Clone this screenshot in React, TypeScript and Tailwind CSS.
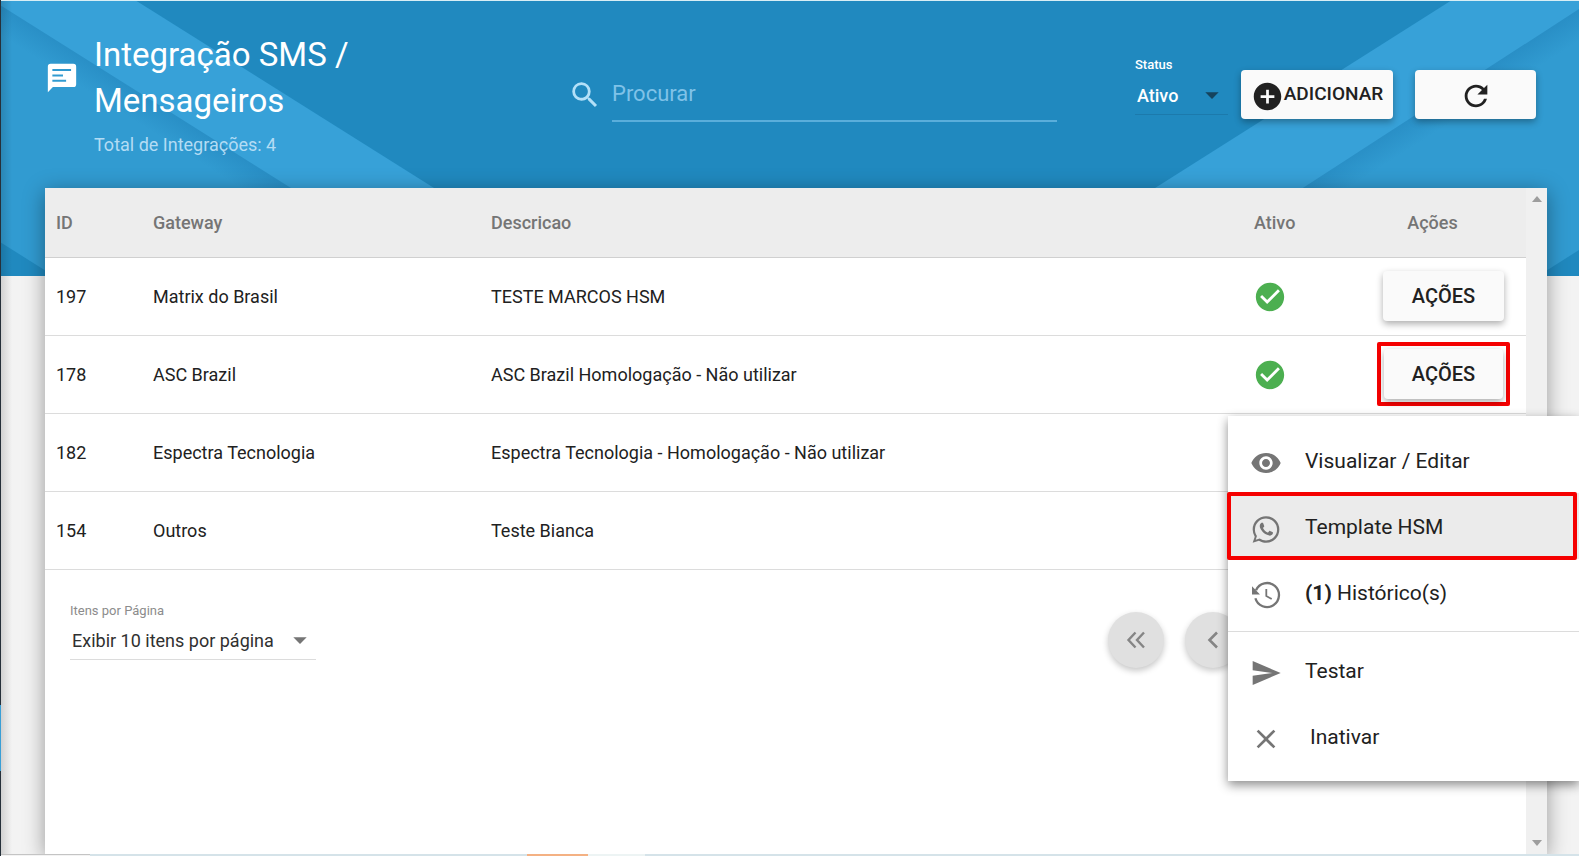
import React from "react";
import {
  MdSearch,
  MdAddCircle,
  MdRefresh,
  MdCheckCircle,
  MdVisibility,
  MdSend,
  MdClose,
  MdArrowDropDown,
} from "react-icons/md";

type Integration = {
  id: number;
  gateway: string;
  description: string;
  active: boolean;
  highlighted?: boolean;
};

const integrations: Integration[] = [
  { id: 197, gateway: "Matrix do Brasil", description: "TESTE MARCOS HSM", active: true },
  { id: 178, gateway: "ASC Brazil", description: "ASC Brazil Homologação - Não utilizar", active: true, highlighted: true },
  { id: 182, gateway: "Espectra Tecnologia", description: "Espectra Tecnologia - Homologação - Não utilizar", active: false },
  { id: 154, gateway: "Outros", description: "Teste Bianca", active: false },
];

const raised = "rounded-[4px] bg-[#fafafa] text-[#212121] shadow-[0_3px_7px_rgba(0,0,0,0.32)]";

function Backdrop() {
  return (
    <svg
      className="absolute inset-0 h-full w-full"
      viewBox="0 0 1579 276"
      preserveAspectRatio="none"
      aria-hidden="true"
    >
      <defs>
        <linearGradient id="shadeL" gradientUnits="userSpaceOnUse" x1="143" y1="95" x2="129" y2="117">
          <stop offset="0" stopColor="#298fc6" />
          <stop offset="1" stopColor="#319bd1" />
        </linearGradient>
        <linearGradient id="shadeR" gradientUnits="userSpaceOnUse" x1="1441" y1="98" x2="1455" y2="120">
          <stop offset="0" stopColor="#298fc6" />
          <stop offset="1" stopColor="#319bd1" />
        </linearGradient>
      </defs>
      <rect width="1579" height="276" fill="#2089bf" />
      <polygon points="0,0 135,0 574,276 0,276" fill="#37a1d8" />
      <polygon points="0,5 431,276 0,276" fill="url(#shadeL)" />
      <polygon points="0,242 54,276 0,276" fill="#2089bf" />
      <polygon points="1579,0 1452,0 1016,276 1579,276" fill="#37a1d8" />
      <polygon points="1579,9 1167,276 1579,276" fill="url(#shadeR)" />
      <polygon points="1579,250 1538,276 1579,276" fill="#2089bf" />
    </svg>
  );
}

function ChatIcon() {
  return (
    <svg className="h-[34px] w-[34px]" viewBox="0 0 24 24" aria-hidden="true">
      <path
        fill="currentColor"
        fillRule="evenodd"
        d="M4 2h16a2 2 0 0 1 2 2v12.400a2 2 0 0 1-2 2H5.600L2 22V4a2 2 0 0 1 2-2zM5.200 5.600V7h13.200V5.600zM5.200 9.500v1.400h7.500V9.500zM5.200 13.300v1.400h9.700v-1.400z"
      />
    </svg>
  );
}

function Header() {
  return (
    <div className="relative flex h-[187px] pl-[45px] pr-[43px] text-white">
      <div className="mt-[60px] shrink-0">
        <ChatIcon />
      </div>
      <div className="ml-[15px] w-[474px] shrink-0 pt-[31px]">
        <h1 className="w-[300px] text-[33px] leading-[46px]">Integração SMS / Mensageiros</h1>
        <p className="mt-[9px] text-[18px] leading-6 text-[#b3dcf4]">Total de Integrações: 4</p>
      </div>
      <label className="flex min-w-0 flex-1 pt-[69px]">
        <MdSearch className="mt-2 h-[34px] w-[34px] shrink-0 text-[#b3e0f8]" aria-hidden="true" />
        <input
          type="text"
          aria-label="Procurar"
          placeholder="Procurar"
          className="ml-[10px] h-[52px] min-w-0 flex-1 border-b-2 border-[#5aaedb] bg-transparent pb-1 text-[22px] outline-none placeholder:text-[#7fc2e8]"
        />
      </label>
      <div className="relative ml-[78px] w-[93px] shrink-0 pt-[55px]">
        <label htmlFor="status" className="block text-[13px] font-medium leading-[18px]">
          Status
        </label>
        <select
          id="status"
          defaultValue="Ativo"
          className="mt-1 h-[37px] w-full appearance-none border-b border-[#1c7aac] bg-transparent pb-[2px] pl-[2px] text-[18px] font-medium outline-none"
        >
          <option>Ativo</option>
          <option>Inativo</option>
        </select>
        <MdArrowDropDown className="pointer-events-none absolute right-0 top-[78px] h-8 w-8 text-[#15435d]" aria-hidden="true" />
      </div>
      <button className={`${raised} ml-[13px] mt-[69px] flex h-[49px] w-[152px] shrink-0 items-center justify-center text-[19px] font-medium`}>
        <MdAddCircle className="mt-1 h-[33px] w-[33px]" aria-hidden="true" />
        ADICIONAR
      </button>
      <button aria-label="Atualizar" className={`${raised} ml-[22px] mt-[69px] flex h-[49px] w-[121px] shrink-0 items-center justify-center`}>
        <MdRefresh className="mt-[2px] h-[34px] w-[34px]" aria-hidden="true" />
      </button>
    </div>
  );
}

function IntegrationTable() {
  return (
    <table className="w-full table-fixed border-collapse text-left text-[18px] text-[#212121]">
      <colgroup>
        <col className="w-[97px]" />
        <col className="w-[338px]" />
        <col />
        <col className="w-[140px]" />
        <col className="w-[165px]" />
      </colgroup>
      <thead>
        <tr className="h-[69px] border-b border-[#d0d0d0] bg-[#ededed] text-[#757575]">
          <th className="pl-[11px] font-medium">ID</th>
          <th className="pl-[11px] font-medium">Gateway</th>
          <th className="pl-[11px] font-medium">Descricao</th>
          <th className="pl-[33px] font-medium">Ativo</th>
          <th className="pr-[22px] text-center font-medium">Ações</th>
        </tr>
      </thead>
      <tbody>
        {integrations.map((item) => (
          <tr key={item.id} className="h-[78px] border-b border-[#dcdcdc]">
            <td className="pl-[11px]">{item.id}</td>
            <td className="pl-[11px]">{item.gateway}</td>
            <td className="pl-[11px]">{item.description}</td>
            <td className="pl-8 pt-[2px]">
              {item.active && (
                <MdCheckCircle className="h-[34px] w-[34px] text-[#4caf50]" role="img" aria-label="Ativo" />
              )}
            </td>
            <td className="pl-4">
              {item.active && (
                <span
                  className={
                    item.highlighted
                      ? "block w-[133px] rounded-[2px] border-4 border-[#f50000] p-[3px]"
                      : "ml-[6px] block w-[121px]"
                  }
                >
                  <button className={`${raised} block h-[50px] w-full text-[20px] font-medium`}>AÇÕES</button>
                </span>
              )}
            </td>
          </tr>
        ))}
      </tbody>
    </table>
  );
}

function Pager() {
  const round =
    "flex h-14 w-14 items-center justify-center rounded-full bg-[#e0e0e0] text-[#858585] shadow-[0_3px_6px_rgba(0,0,0,0.22)]";
  return (
    <div className="flex justify-between pl-[25px] pr-[54px] pt-[31px]">
      <div className="relative w-[246px]">
        <label htmlFor="per-page" className="block text-[13px] leading-5 text-[#8c8c8c]">
          Itens por Página
        </label>
        <select
          id="per-page"
          className="h-[39px] w-full appearance-none border-b border-[#dcdcdc] bg-transparent pl-[2px] pt-[2px] text-[18px] text-[#303030] outline-none"
        >
          <option>Exibir 10 itens por página</option>
          <option>Exibir 25 itens por página</option>
        </select>
        <MdArrowDropDown className="pointer-events-none absolute right-0 top-[23px] h-8 w-8 text-[#757575]" aria-hidden="true" />
      </div>
      <div className="mt-[11px] flex gap-[21px]">
        <button aria-label="Primeira página" className={round}>
          <svg className="h-5 w-5" viewBox="0 0 20 20" fill="none" stroke="currentColor" strokeWidth="2.400" aria-hidden="true">
            <path d="M9.500 2.500 2.500 10l7 7.500M18 2.500 11 10l7 7.500" />
          </svg>
        </button>
        <button aria-label="Página anterior" className={round}>
          <svg className="h-5 w-5" viewBox="0 0 20 20" fill="none" stroke="currentColor" strokeWidth="2.600" aria-hidden="true">
            <path d="M14 2.500 6.500 10l7.500 7.500" />
          </svg>
        </button>
        <button aria-label="Página 1" className={round} />
        <button aria-label="Próxima página" className={round} />
        <button aria-label="Última página" className={round} />
      </div>
    </div>
  );
}

function ScrollRail() {
  return (
    <div className="flex w-[21px] shrink-0 flex-col items-center justify-between bg-[#f0f0f0] py-2" aria-hidden="true">
      <svg className="h-[6px] w-[10px]" viewBox="0 0 10 6">
        <path d="M0 6 5 0l5 6z" fill="#9d9d9d" />
      </svg>
      <svg className="h-[6px] w-[10px]" viewBox="0 0 10 6">
        <path d="M0 0 5 6l5-6z" fill="#9d9d9d" />
      </svg>
    </div>
  );
}

function WhatsApp() {
  return (
    <svg className="h-[33px] w-8" viewBox="0 0 24 24" fill="currentColor" aria-hidden="true">
      <path d="M16.750 13.960c.25.130.41.200.46.300.06.110.04.610-.21 1.180-.2.560-1.240 1.100-1.700 1.120-.46.020-.47.360-2.960-.73-2.490-1.090-3.990-3.750-4.110-3.920-.12-.17-.96-1.380-.92-2.610.05-1.220.69-1.800.95-2.040.24-.26.510-.29.680-.26h.47c.15 0 .36-.06.550.45l.69 1.870c.06.130.1.280.01.440l-.27.410-.39.420c-.12.120-.26.250-.12.500.12.260.620 1.090 1.320 1.780.91.880 1.710 1.170 1.950 1.300.24.140.39.120.54-.04l.81-.94c.19-.25.350-.19.580-.11l1.670.88M12 2a10 10 0 0 1 10 10 10 10 0 0 1-10 10c-1.970 0-3.800-.57-5.350-1.550L2 22l1.550-4.650A9.969 9.969 0 0 1 2 12 10 10 0 0 1 12 2m0 1.700a8.300 8.300 0 0 0-8.300 8.300c0 1.780.56 3.430 1.500 4.800L4.300 19.700l2.980-.95A8.250 8.250 0 0 0 12 20.300a8.300 8.300 0 0 0 8.300-8.300A8.300 8.300 0 0 0 12 3.700z" />
    </svg>
  );
}

function HistoryIcon() {
  return (
    <svg className="h-8 w-8" viewBox="-2 -3 32 32" fill="none" stroke="currentColor" aria-hidden="true">
      <path d="M4 8.200A12 12 0 1 1 3.400 16.200" strokeWidth="2.300" />
      <path d="M14.300 7v7l5.400 3" strokeWidth="1.800" />
      <path d="M0 4.200v8.200h8z" fill="currentColor" stroke="none" />
    </svg>
  );
}

function ActionMenu() {
  const row = "flex h-[66px] w-full items-center gap-[23px] pl-[22px] text-left";
  const icon = "h-8 w-8";
  const items = "mt-[6px] shrink-0 text-[#757575]";
  const label = "pt-1";
  return (
    <div
      role="menu"
      className="absolute right-0 top-[416px] w-[351px] bg-white pb-3 pt-[11px] text-[21px] text-[#212121] shadow-[0_4px_10px_rgba(0,0,0,0.45)]"
    >
      <button role="menuitem" className={row}>
        <span className={items}><MdVisibility className={icon} /></span>
        <span className={label}>Visualizar / Editar</span>
      </button>
      <div className="relative bg-[#ebebeb]">
        <button role="menuitem" className={row}>
          <span className={items}><WhatsApp /></span>
          <span className={label}>Template HSM</span>
        </button>
        <span className="pointer-events-none absolute -inset-y-px -left-px right-[2px] rounded-[2px] border-4 border-[#f50000]" />
      </div>
      <button role="menuitem" className={row}>
        <span className={items}><HistoryIcon /></span>
        <span className={label}><b className="font-bold">(1)</b> Histórico(s)</span>
      </button>
      <hr className="mb-[5px] mt-[6px] border-[#dcdcdc]" />
      <button role="menuitem" className={row}>
        <span className={items}><MdSend className={icon} /></span>
        <span className={label}>Testar</span>
      </button>
      <button role="menuitem" className={row}>
        <span className={items}><MdClose className={icon} /></span>
        <span className="pl-[5px] pt-1">Inativar</span>
      </button>
    </div>
  );
}

export default function App() {
  return (
    <div className="relative flex min-h-screen flex-col overflow-hidden bg-[#f3f3f3] font-['Roboto',sans-serif]">
      <div className="absolute inset-x-0 top-0 h-[276px]">
        <Backdrop />
      </div>
      <div className="absolute inset-y-0 left-0 w-3 bg-linear-to-r from-black/15 to-transparent" />
      <div className="relative h-px bg-[#d8eef5]" />
      <Header />
      <main className="relative ml-[45px] mr-8 flex flex-1 bg-white shadow-[0_4px_20px_rgba(0,0,0,0.38)]">
        <div className="min-w-0 flex-1">
          <IntegrationTable />
          <Pager />
        </div>
        <ScrollRail />
      </main>
      <div className="relative flex h-[2px] bg-[#d5e3e9]">
        <span className="w-[90px] border-t border-[#c4c4c4] bg-[#f3f3f3]" />
        <span className="ml-[437px] w-[61px] bg-[#f4b183]" />
        <span className="w-[57px] bg-[#edf4f4]" />
      </div>
      <div className="absolute inset-y-0 left-0 flex w-px flex-col bg-[#26303a]">
        <span className="mt-[705px] h-[66px] bg-[#3a9fd6]" />
      </div>
      <ActionMenu />
    </div>
  );
}
